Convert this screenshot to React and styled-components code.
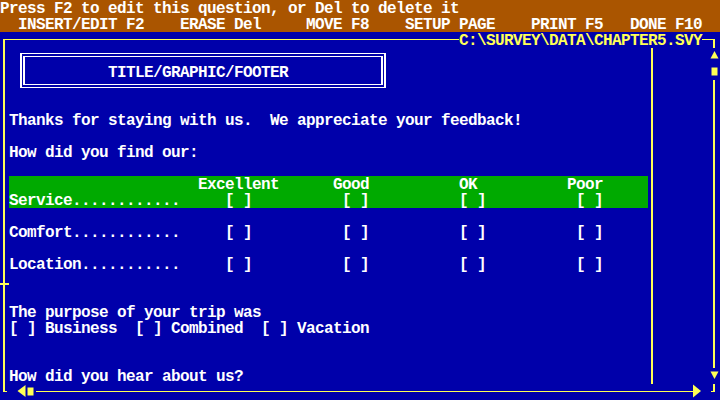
import React from 'react';
import styled, { createGlobalStyle } from 'styled-components';

const C = {
  blue: '#0000AA',
  brown: '#AA5500',
  green: '#00AA00',
  white: '#FFFFFF',
  yellow: '#FFFF55',
};

const Global = createGlobalStyle`
  html, body { margin: 0; padding: 0; background: ${C.blue}; overflow: hidden; }
  body {
    font-family: "Liberation Mono", "DejaVu Sans Mono", monospace;
    font-size: 16px;
    letter-spacing: -0.6px;
    font-weight: bold;
  }
`;

const Screen = styled.div`
  width: 720px;
  height: 400px;
  display: flex;
  flex-direction: column;
  background: ${C.blue};
  color: ${C.white};
`;

const StatusBar = styled.header`
  flex: none;
  height: 32px;
  background: ${C.brown};
  color: ${C.white};
`;

const TextLine = styled.div`
  box-sizing: border-box;
  height: 16px;
  padding-top: 2px;
  line-height: 14px;
  white-space: pre;
  margin-top: ${(p) => (p.$skip || 0) * 16}px;
`;

/* ---------- window frame ---------- */
const Window = styled.section`
  flex: 1;
  display: flex;
  flex-direction: column;
  color: ${C.yellow};
`;

const Edge = styled.div`
  flex: none;
  height: 16px;
  display: flex;
`;

const CornerTL = styled.div`
  flex: none;
  width: 4px;
  height: 8px;
  margin: 7px 0 0 3px;
  border-left: 2px solid ${C.yellow};
  border-top: 1px solid ${C.yellow};
`;

const CornerTR = styled.div`
  flex: none;
  width: 2px;
  height: 8px;
  margin: 7px 5px 0 0;
  border-right: 2px solid ${C.yellow};
  border-top: 1px solid ${C.yellow};
`;

const CornerBL = styled.div`
  flex: none;
  width: 2px;
  height: 7px;
  margin: 0 2px 0 3px;
  border-left: 2px solid ${C.yellow};
  border-bottom: 1px solid ${C.yellow};
`;

const CornerBR = styled.div`
  flex: none;
  width: 2px;
  height: 7px;
  margin: 0 5px 0 0;
  border-right: 2px solid ${C.yellow};
  border-bottom: 1px solid ${C.yellow};
`;

const Rule = styled.div`
  flex: ${(p) => (p.$width ? 'none' : '1')};
  width: ${(p) => (p.$width ? `${p.$width}px` : 'auto')};
  height: 1px;
  margin-top: 7px;
  background: ${C.yellow};
`;

const Cell = styled.div`
  flex: none;
  width: 9px;
  height: 16px;
`;

const PathLabel = styled.div`
  flex: none;
  box-sizing: border-box;
  height: 16px;
  padding-top: 2px;
  line-height: 14px;
  white-space: pre;
  color: ${C.yellow};
`;

const Body = styled.div`
  flex: none;
  height: 336px;
  display: flex;
`;

const Rail = styled.div`
  flex: none;
  width: 9px;
  display: flex;
  flex-direction: column;
`;

const RailSegment = styled.div`
  flex: ${(p) => (p.$height ? 'none' : '1')};
  height: ${(p) => (p.$height ? `${p.$height}px` : 'auto')};
  margin-left: 3px;
  border-left: 2px solid ${C.yellow};
`;

const PageMark = styled.div`
  flex: none;
  height: 2px;
  width: 9px;
  background: ${C.yellow};
`;

const Divider = styled.div`
  flex: none;
  width: 4px;
  margin-left: 3px;
  border-left: 2px solid ${C.yellow};
`;

const Gutter = styled.div`
  flex: none;
  width: 54px;
`;

const ScrollBar = styled.div`
  flex: none;
  width: 9px;
  display: flex;
  flex-direction: column;
`;

const Track = styled.div`
  flex: 1;
  margin-left: 2px;
  border-left: 2px solid ${C.yellow};
`;

/* ---------- content ---------- */
const Content = styled.main`
  flex: none;
  width: 639px;
  display: flex;
  flex-direction: column;
  color: ${C.white};
`;

const TitleBlock = styled.div`
  flex: none;
  height: 48px;
`;

const TitleFrame = styled.div`
  box-sizing: border-box;
  width: 366px;
  height: 35px;
  margin: 5px 0 0 11px;
  padding: 2px 1px;
  border-style: solid;
  border-color: ${C.white};
  border-width: 1px 2px;
`;

const TitleInner = styled.div`
  box-sizing: border-box;
  height: 100%;
  padding: 7px 0 0 83px;
  border-style: solid;
  border-color: ${C.white};
  border-width: 1px 2px;
`;

const RatingRow = styled.div`
  box-sizing: border-box;
  display: grid;
  grid-template-columns: 171px repeat(4, 117px);
  height: 16px;
  padding-top: 2px;
  line-height: 14px;
  white-space: pre;
  background: ${(p) => (p.$active ? C.green : 'transparent')};
  margin-top: ${(p) => (p.$skip || 0) * 16}px;
`;

const RatingLabel = styled.span``;

const RatingCell = styled.span`
  text-align: center;
  padding-right: ${(p) => (p.$even ? '9px' : '0')};
`;

const OptionRow = styled.div`
  box-sizing: border-box;
  display: flex;
  gap: 18px;
  height: 16px;
  padding-top: 2px;
  line-height: 14px;
  white-space: pre;
`;

const Option = styled.span``;

/* ---------- glyphs ---------- */
const Glyph = ({ shape }) => {
  const shapes = {
    up: <polygon points="3.5,3 -0.5,10.5 7.5,10.5" />,
    down: <polygon points="-0.5,3.5 7.5,3.5 3.5,11" />,
    left: <polygon points="-0.5,7 7.5,1 7.5,13" />,
    right: <polygon points="0,0.5 8,7 0,13.5" />,
    block: <rect x="0.5" y="3.5" width="6" height="8" />,
  };
  return (
    <svg width="9" height="16" viewBox="0 0 9 16" style={{ display: 'block', overflow: 'visible' }}>
      <g fill={C.yellow}>{shapes[shape]}</g>
    </svg>
  );
};

const ratings = ['Excellent', 'Good', 'OK', 'Poor'];
const aspects = [
  { label: 'Service............', active: true, skip: 0 },
  { label: 'Comfort............', active: false, skip: 1 },
  { label: 'Location...........', active: false, skip: 1 },
];
const purposes = ['Business', 'Combined', 'Vacation'];

export default function App() {
  return (
    <>
      <Global />
      <Screen>
        <StatusBar>
          <TextLine>Press F2 to edit this question, or Del to delete it</TextLine>
          <TextLine>{'  INSERT/EDIT F2    ERASE Del     MOVE F8    SETUP PAGE    PRINT F5   DONE F10'}</TextLine>
        </StatusBar>

        <Window>
          <Edge>
            <CornerTL />
            <Rule />
            <PathLabel>{'C:\\SURVEY\\DATA\\CHAPTER5.SVY'}</PathLabel>
            <Rule $width={9} />
            <CornerTR />
          </Edge>

          <Body>
            <Rail>
              <RailSegment $height={235} />
              <PageMark />
              <RailSegment />
            </Rail>

            <Content>
              <TitleBlock>
                <TitleFrame>
                  <TitleInner>
                    <TextLine>TITLE/GRAPHIC/FOOTER</TextLine>
                  </TitleInner>
                </TitleFrame>
              </TitleBlock>

              <TextLine $skip={1}>Thanks for staying with us.  We appreciate your feedback!</TextLine>
              <TextLine $skip={1}>How did you find our:</TextLine>

              <RatingRow $active $skip={1}>
                <RatingLabel />
                {ratings.map((r) => (
                  <RatingCell key={r} $even={r.length % 2 === 0}>{r}</RatingCell>
                ))}
              </RatingRow>
              {aspects.map((a) => (
                <RatingRow key={a.label} $active={a.active} $skip={a.skip}>
                  <RatingLabel>{a.label}</RatingLabel>
                  {ratings.map((r) => (
                    <RatingCell key={r}>[ ]</RatingCell>
                  ))}
                </RatingRow>
              ))}

              <TextLine $skip={2}>The purpose of your trip was</TextLine>
              <OptionRow>
                {purposes.map((p) => (
                  <Option key={p}>[ ] {p}</Option>
                ))}
              </OptionRow>

              <TextLine $skip={2}>How did you hear about us?</TextLine>
            </Content>

            <Divider />
            <Gutter />

            <ScrollBar>
              <Cell><Glyph shape="up" /></Cell>
              <Cell><Glyph shape="block" /></Cell>
              <Track />
              <Cell><Glyph shape="down" /></Cell>
            </ScrollBar>
          </Body>

          <Edge>
            <CornerBL />
            <Cell />
            <Cell><Glyph shape="left" /></Cell>
            <Cell><Glyph shape="block" /></Cell>
            <Rule />
            <Cell><Glyph shape="right" /></Cell>
            <Cell />
            <CornerBR />
          </Edge>
        </Window>
      </Screen>
    </>
  );
}
